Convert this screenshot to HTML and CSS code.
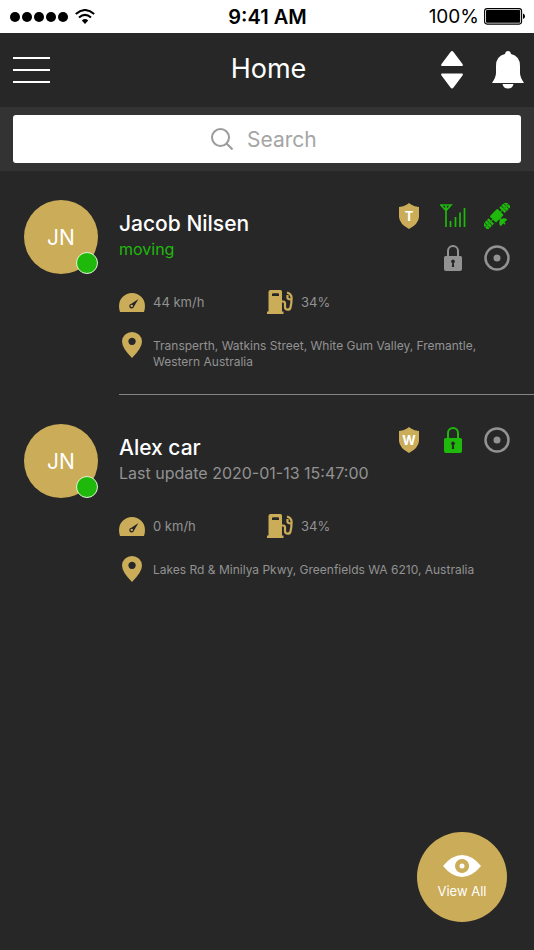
FILE: index.html
```html
<!DOCTYPE html>
<html lang="en">
<head>
<meta charset="utf-8">
<meta name="viewport" content="width=device-width, initial-scale=1">
<title>Home</title>
<link rel="stylesheet" href="styles.css">
</head>
<body>
<svg class="sprite" aria-hidden="true">
  <symbol id="shield" viewBox="0 0 22 26"><path fill="currentColor" d="M11 0 L13 1.5 Q16.500 3.500 21 4 V14 Q20.500 21 11 26 Q1.500 21 1 14 V4 Q5.500 3.500 9 1.500Z"/></symbol>
  <symbol id="signal" viewBox="0 0 26 24"><g fill="none" stroke="currentColor" stroke-width="1.700"><path d="M1 1H11L6 6.500Z M6 1V23"/><path d="M10.500 17V23 M15.500 13V23 M20 8.500V23 M24.500 4V23"/></g></symbol>
  <symbol id="satellite" viewBox="0 0 26 26"><g fill="currentColor" transform="rotate(-45 13 13)"><rect x="7.500" y="8" width="11" height="9" rx="1"/><path d="M-3.500 8.700h2.700v3.500h-2.700z M-.2 8.700h2.700v3.500h-2.700z M3.100 8.700h2.400v3.500h-2.400z M-3.500 12.800h2.700v3.500h-2.700z M-.2 12.800h2.700v3.500h-2.700z M3.100 12.800h2.400v3.500h-2.400z"/><path d="M20.500 8.700h2.400v3.500h-2.400z M23.500 8.700h2.700v3.500h-2.700z M26.800 8.700h2.700v3.500h-2.700z M20.500 12.800h2.400v3.500h-2.400z M23.500 12.800h2.700v3.500h-2.700z M26.800 12.800h2.700v3.500h-2.700z"/><rect x="-2" y="12" width="30" height="1"/><path d="M12 17h2v2h-2z M8.300 22.800a4.700 4.700 0 0 1 9.400 0z M12.300 22h1.400v2.500h-1.400z"/></g></symbol>
  <symbol id="lock" viewBox="0 0 18 26"><path fill="none" stroke="currentColor" stroke-width="2" d="M4 12V6a5 5 0 0 1 10 0V12"/><path fill="currentColor" fill-rule="evenodd" d="M1.500 11H16.500Q18 11 18 12.500V24Q18 26 16 26H2Q0 26 0 24V12.500Q0 11 1.500 11Z M9 14.500A2 2 0 0 0 8.200 18.300L7.800 22H10.200L9.800 18.300A2 2 0 0 0 9 14.500Z"/></symbol>
  <symbol id="target" viewBox="0 0 26 26"><circle cx="13" cy="13" r="11.500" fill="none" stroke="currentColor" stroke-width="2.500"/><circle cx="13" cy="13" r="3.500" fill="currentColor"/></symbol>
  <symbol id="speed" viewBox="0 0 26 19"><path fill="currentColor" fill-rule="evenodd" d="M1 19Q0 16 0 13A13 13 0 0 1 26 13Q26 16 25 19Z M19.500 6L12.300 10.800A2.400 2.400 0 1 0 15 13.500Z M12.800 11.700a1.200 1.200 0 1 1-.1 0Z"/></symbol>
  <symbol id="fuel" viewBox="0 0 26 24"><path fill="currentColor" fill-rule="evenodd" d="M3.500 0H13.500Q15 0 15 1.500V21.500H16.500V24H0V21.500H1.500V2Q1.500 0 3.500 0Z M6 3.200Q5 3.200 5 4.200V6H12V4.200Q12 3.200 11 3.200Z"/><path fill="none" stroke="currentColor" stroke-width="2.200" d="M15 11.500H16Q18 11.500 18 13.500V17Q18 19.700 20.800 19.700Q23.200 19.700 23.600 17Q24.600 13 24.600 8Q24.600 4 20 2.500 M20.500 5V8Q21 9.500 24 9.500"/></symbol>
  <symbol id="pin" viewBox="0 0 20 26"><path fill="currentColor" fill-rule="evenodd" d="M10 0A10 9.500 0 0 1 20 9.500Q20 16 10 26Q0 16 0 9.500A10 9.500 0 0 1 10 0Z M10 5.700a3.700 3.700 0 1 0 .1 0Z"/></symbol>
</svg>

<div class="status-bar">
  <div class="status-left">
    <span class="dots"><i></i><i></i><i></i><i></i><i></i></span>
    <svg width="20" height="15" viewBox="0 0 20 15"><g fill="none" stroke="#000" stroke-width="2"><path d="M.8 5Q10-3 19.200 5"/><path d="M4 8.500Q10 3.200 16 8.500"/></g><path d="M6.800 11.500Q10 8.700 13.200 11.500L10 15Z"/></svg>
  </div>
  <time class="clock">9:41 AM</time>
  <div class="status-right">
    <span>100%</span>
    <svg width="41" height="17" viewBox="0 0 41 17"><rect x=".6" y=".6" width="37" height="15.500" rx="2.500" fill="none" stroke="#000" stroke-width="1.100"/><rect x="2" y="2" width="34.200" height="12.700" rx="1"/><path d="M39 5.500Q41 6 41 8.300Q41 10.600 39 11Z"/></svg>
  </div>
</div>

<header class="app-bar">
  <button class="icon-button" aria-label="Menu"><svg width="37" height="28" viewBox="0 0 37 28"><path stroke="#fff" stroke-width="2" d="M0 2H37M0 14H37M0 26H37"/></svg></button>
  <h1>Home</h1>
  <div class="actions">
    <button class="icon-button" aria-label="Sort"><svg width="22" height="38" viewBox="0 0 22 38"><path fill="#fff" d="M9.500 1Q11-.8 12.500 1L21.500 13Q22.500 15 21 15H1Q-.5 15 .5 13Z M9.500 36.500Q11 38.500 12.500 36.500L21.500 24.500Q22.500 22.500 21 22.500H1Q-.5 22.500 .5 24.500Z"/></svg></button>
    <button class="icon-button" aria-label="Notifications"><svg width="32" height="38" viewBox="0 0 32 38"><path fill="#fff" d="M16 0Q18.500 0 19 3Q28 5 28 15V22Q28 26 32 32H0Q4 26 4 22V15Q4 5 13 3Q13.500 0 16 0Z M10.500 33H21.500Q20.500 37.500 16 37.500Q11.500 37.500 10.500 33Z"/></svg></button>
  </div>
</header>

<form class="search" role="search">
  <label class="search-box">
    <svg width="22" height="22" viewBox="0 0 22 22"><g fill="none" stroke="#9b9b9b" stroke-width="2"><circle cx="9.500" cy="9.500" r="8.500"/><path d="M15.500 15.500L21.500 21.500"/></g></svg>
    <input type="search" placeholder="Search" aria-label="Search">
  </label>
</form>

<main>
  <article class="vehicle">
    <div class="avatar">JN<span class="presence"></span></div>
    <div class="details">
      <div class="summary">
        <div class="identity"><h2>Jacob Nilsen</h2><p class="moving">moving</p></div>
        <div class="indicators">
          <span class="shield"><svg width="22" height="26"><use href="#shield"/></svg><b>T</b></span>
          <svg class="on" width="26" height="24"><use href="#signal"/></svg>
          <svg class="on" width="26" height="26"><use href="#satellite"/></svg>
          <svg class="second" width="18" height="26"><use href="#lock"/></svg>
          <svg width="26" height="26"><use href="#target"/></svg>
        </div>
      </div>
      <div class="metrics">
        <div class="metric"><svg width="26" height="19"><use href="#speed"/></svg>44 km/h</div>
        <div class="metric"><svg width="26" height="24"><use href="#fuel"/></svg>34%</div>
      </div>
      <div class="location"><svg width="26" height="26"><use href="#pin"/></svg><p>Transperth, Watkins Street, White Gum Valley, Fremantle, Western Australia</p></div>
    </div>
  </article>
  <article class="vehicle">
    <div class="avatar">JN<span class="presence"></span></div>
    <div class="details">
      <div class="summary">
        <div class="identity"><h2>Alex car</h2><p>Last update 2020-01-13 15:47:00</p></div>
        <div class="indicators">
          <span class="shield"><svg width="22" height="26"><use href="#shield"/></svg><b>W</b></span>
          <svg class="on" width="18" height="26"><use href="#lock"/></svg>
          <svg width="26" height="26"><use href="#target"/></svg>
        </div>
      </div>
      <div class="metrics">
        <div class="metric"><svg width="26" height="19"><use href="#speed"/></svg>0 km/h</div>
        <div class="metric"><svg width="26" height="24"><use href="#fuel"/></svg>34%</div>
      </div>
      <div class="location"><svg width="26" height="26"><use href="#pin"/></svg><p>Lakes Rd &amp; Minilya Pkwy, Greenfields WA 6210, Australia</p></div>
    </div>
  </article>
</main>

<button class="view-all">
  <svg width="38" height="22" viewBox="0 0 38 22"><path fill="#fff" fill-rule="evenodd" d="M0 11Q9 0 19 0Q29 0 38 11Q29 22 19 22Q9 22 0 11Z M19 4a7 7 0 1 0 .1 0Z"/><circle cx="19" cy="11" r="2.500" fill="#fff"/></svg>
  View All
</button>
</body>
</html>
```
FILE: styles.css
```css
* { box-sizing: border-box; }

body {
  margin: 0;
  min-height: 100vh;
  background: #272727;
  color: #929292;
  font-family: Inter, "Liberation Sans", sans-serif;
}

h1, h2, p { margin: 0; font-weight: 400; }
svg { display: block; flex: none; }
symbol { overflow: visible; }
button { border: 0; padding: 0; background: none; color: #fff; font: inherit; }
.sprite { position: absolute; width: 0; height: 0; }

.status-bar, .app-bar {
  display: grid;
  grid-template-columns: 1fr auto 1fr;
  align-items: center;
}

.status-bar {
  height: 33px;
  padding: 0 9px 0 10px;
  background: #fff;
  color: #000;
  font-size: 19px;
}
.status-left, .status-right, .dots { display: flex; align-items: center; }
.status-left { gap: 7px; }
.status-right { justify-content: flex-end; gap: 5px; }
.dots { gap: 2px; }
.dots i { width: 10px; height: 10px; border-radius: 50%; background: #000; }
.clock { font-size: 20px; font-weight: 600; }

.app-bar { height: 74px; padding: 0 10px 0 13px; color: #fff; }
.app-bar h1 { padding-bottom: 2px; font-size: 27px; line-height: 32px; }
.actions { display: flex; justify-content: flex-end; gap: 29px; }
.icon-button { display: flex; justify-self: start; }

.search { padding: 8px 13px; background: #333; }
.search-box {
  display: flex;
  align-items: center;
  justify-content: center;
  gap: 14px;
  height: 48px;
  border-radius: 3px;
  background: #fff;
}
.search input {
  appearance: none;
  width: 76px;
  padding: 0;
  border: 0;
  outline: 0;
  background: none;
  font: inherit;
  font-size: 21px;
}
.search input::-webkit-search-cancel-button { display: none; }
.search input::placeholder { color: #a5a5a5; opacity: 1; }

.vehicle { display: flex; gap: 21px; padding: 29px 0 0 24px; }
.avatar {
  position: relative;
  display: flex;
  flex: none;
  align-items: center;
  justify-content: center;
  width: 74px;
  height: 74px;
  border-radius: 50%;
  background: #cbac58;
  color: #fff;
  font-size: 21px;
}
.presence {
  position: absolute;
  right: 0;
  bottom: 0;
  width: 22px;
  height: 22px;
  border: 1px solid #e4f2d8;
  border-radius: 50%;
  background: #1fb90c;
}
.details { flex: 1; min-width: 0; padding-bottom: 24px; border-bottom: 1px solid #858585; }
.vehicle:last-child .details { border-bottom: 0; }
.summary { display: flex; justify-content: space-between; min-height: 74px; padding-right: 15px; }
.identity { flex: 1; padding-top: 10px; white-space: nowrap; }
.identity h2 { color: #fff; font-size: 21px; font-weight: 500; line-height: 28px; }
.identity p { font-size: 16px; line-height: 22px; }
.identity .moving, .on { color: #1fb90c; }
.indicators {
  display: grid;
  grid-template-columns: repeat(3, 44px);
  grid-auto-rows: 32px;
  row-gap: 10px;
  place-items: center;
}
.second { grid-column: 2; }
.shield { display: grid; place-items: center; color: #cbac58; }
.shield > * { grid-area: 1 / 1; }
.shield b { color: #fff; font-size: 13px; line-height: 16px; }

.metrics { display: flex; margin-top: 16px; }
.metric { display: flex; align-items: center; gap: 8px; width: 148px; height: 24px; font-size: 13px; }
.metric svg, .location svg { color: #cbac58; }
.location { display: flex; gap: 8px; margin-top: 18px; padding-right: 40px; }
.location p { padding-top: 6px; font-size: 12px; line-height: 16px; }

.view-all {
  position: fixed;
  right: 27px;
  bottom: 28px;
  display: flex;
  flex-direction: column;
  align-items: center;
  justify-content: center;
  gap: 6px;
  width: 90px;
  height: 90px;
  border-radius: 50%;
  background: #cbac58;
  font-size: 13px;
  line-height: 16px;
}
```
